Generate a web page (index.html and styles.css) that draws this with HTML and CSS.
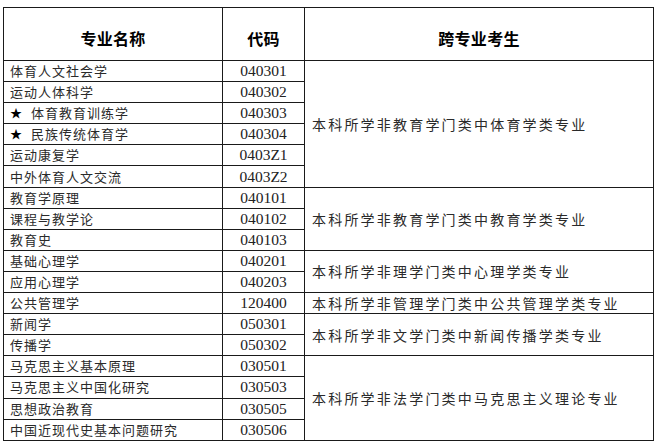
FILE: index.html
```html
<!DOCTYPE html>
<html lang="zh-CN">
<head>
<meta charset="utf-8">
<title>跨专业考生</title>
<link rel="stylesheet" href="styles.css">
</head>
<body>
<table class="majors">
  <colgroup>
    <col class="c-name">
    <col class="c-code">
    <col class="c-req">
  </colgroup>
  <thead>
    <tr class="head">
      <th>专业名称</th>
      <th>代码</th>
      <th>跨专业考生</th>
    </tr>
  </thead>
  <tbody>
    <tr><td class="name">体育人文社会学</td><td class="code">040301</td><td class="req" rowspan="6">本科所学非教育学门类中体育学类专业</td></tr>
    <tr><td class="name">运动人体科学</td><td class="code">040302</td></tr>
    <tr><td class="name"><span class="star">★</span>体育教育训练学</td><td class="code">040303</td></tr>
    <tr><td class="name"><span class="star">★</span>民族传统体育学</td><td class="code">040304</td></tr>
    <tr><td class="name">运动康复学</td><td class="code">0403Z1</td></tr>
    <tr><td class="name">中外体育人文交流</td><td class="code">0403Z2</td></tr>
    <tr><td class="name">教育学原理</td><td class="code">040101</td><td class="req" rowspan="3">本科所学非教育学门类中教育学类专业</td></tr>
    <tr><td class="name">课程与教学论</td><td class="code">040102</td></tr>
    <tr><td class="name">教育史</td><td class="code">040103</td></tr>
    <tr><td class="name">基础心理学</td><td class="code">040201</td><td class="req" rowspan="2">本科所学非理学门类中心理学类专业</td></tr>
    <tr><td class="name">应用心理学</td><td class="code">040203</td></tr>
    <tr><td class="name">公共管理学</td><td class="code">120400</td><td class="req">本科所学非管理学门类中公共管理学类专业</td></tr>
    <tr><td class="name">新闻学</td><td class="code">050301</td><td class="req" rowspan="2">本科所学非文学门类中新闻传播学类专业</td></tr>
    <tr><td class="name">传播学</td><td class="code">050302</td></tr>
    <tr><td class="name">马克思主义基本原理</td><td class="code">030501</td><td class="req" rowspan="4">本科所学非法学门类中马克思主义理论专业</td></tr>
    <tr><td class="name">马克思主义中国化研究</td><td class="code">030503</td></tr>
    <tr><td class="name">思想政治教育</td><td class="code">030505</td></tr>
    <tr><td class="name">中国近现代史基本问题研究</td><td class="code">030506</td></tr>
  </tbody>
</table>
</body>
</html>
```

FILE: styles.css
```css
html, body {
  background: #ffffff;
}
body {
  margin: 7px 0 0 3px;
  font-family: "Noto Sans CJK SC", "Noto Sans", sans-serif;
  color: #2a2a2a;
}
.majors {
  border-collapse: collapse;
  table-layout: fixed;
  width: 650px;
  border: 1px solid #1a1a1a;
}
.c-name { width: 219px; }
.c-code { width: 82px; }
.c-req { width: 349px; }
.majors th,
.majors td {
  border: 1px solid #1a1a1a;
  padding: 0;
  vertical-align: middle;
  white-space: nowrap;
  overflow: hidden;
}
.head {
  height: 53px;
}
.head th {
  font-size: 16px;
  font-weight: 700;
  color: #000;
  text-align: center;
  padding-top: 7px;
  letter-spacing: 0.3px;
  line-height: 20px;
}
.majors tbody tr {
  height: 21.1px;
}
.name {
  font-size: 13px;
  letter-spacing: 1px;
  line-height: 18px;
  padding-left: 6px !important;
  text-align: left;
}
.star {
  display: inline-block;
  width: 21px;
  font-size: 12px;
  color: #000;
}
.code {
  font-family: "Liberation Serif", "Times New Roman", serif;
  font-size: 15.5px;
  line-height: 18px;
  text-align: center;
  color: #222;
}
.req {
  font-size: 14px;
  letter-spacing: 2.2px;
  line-height: 18px;
  padding-left: 7px !important;
  text-align: left;
}
```
